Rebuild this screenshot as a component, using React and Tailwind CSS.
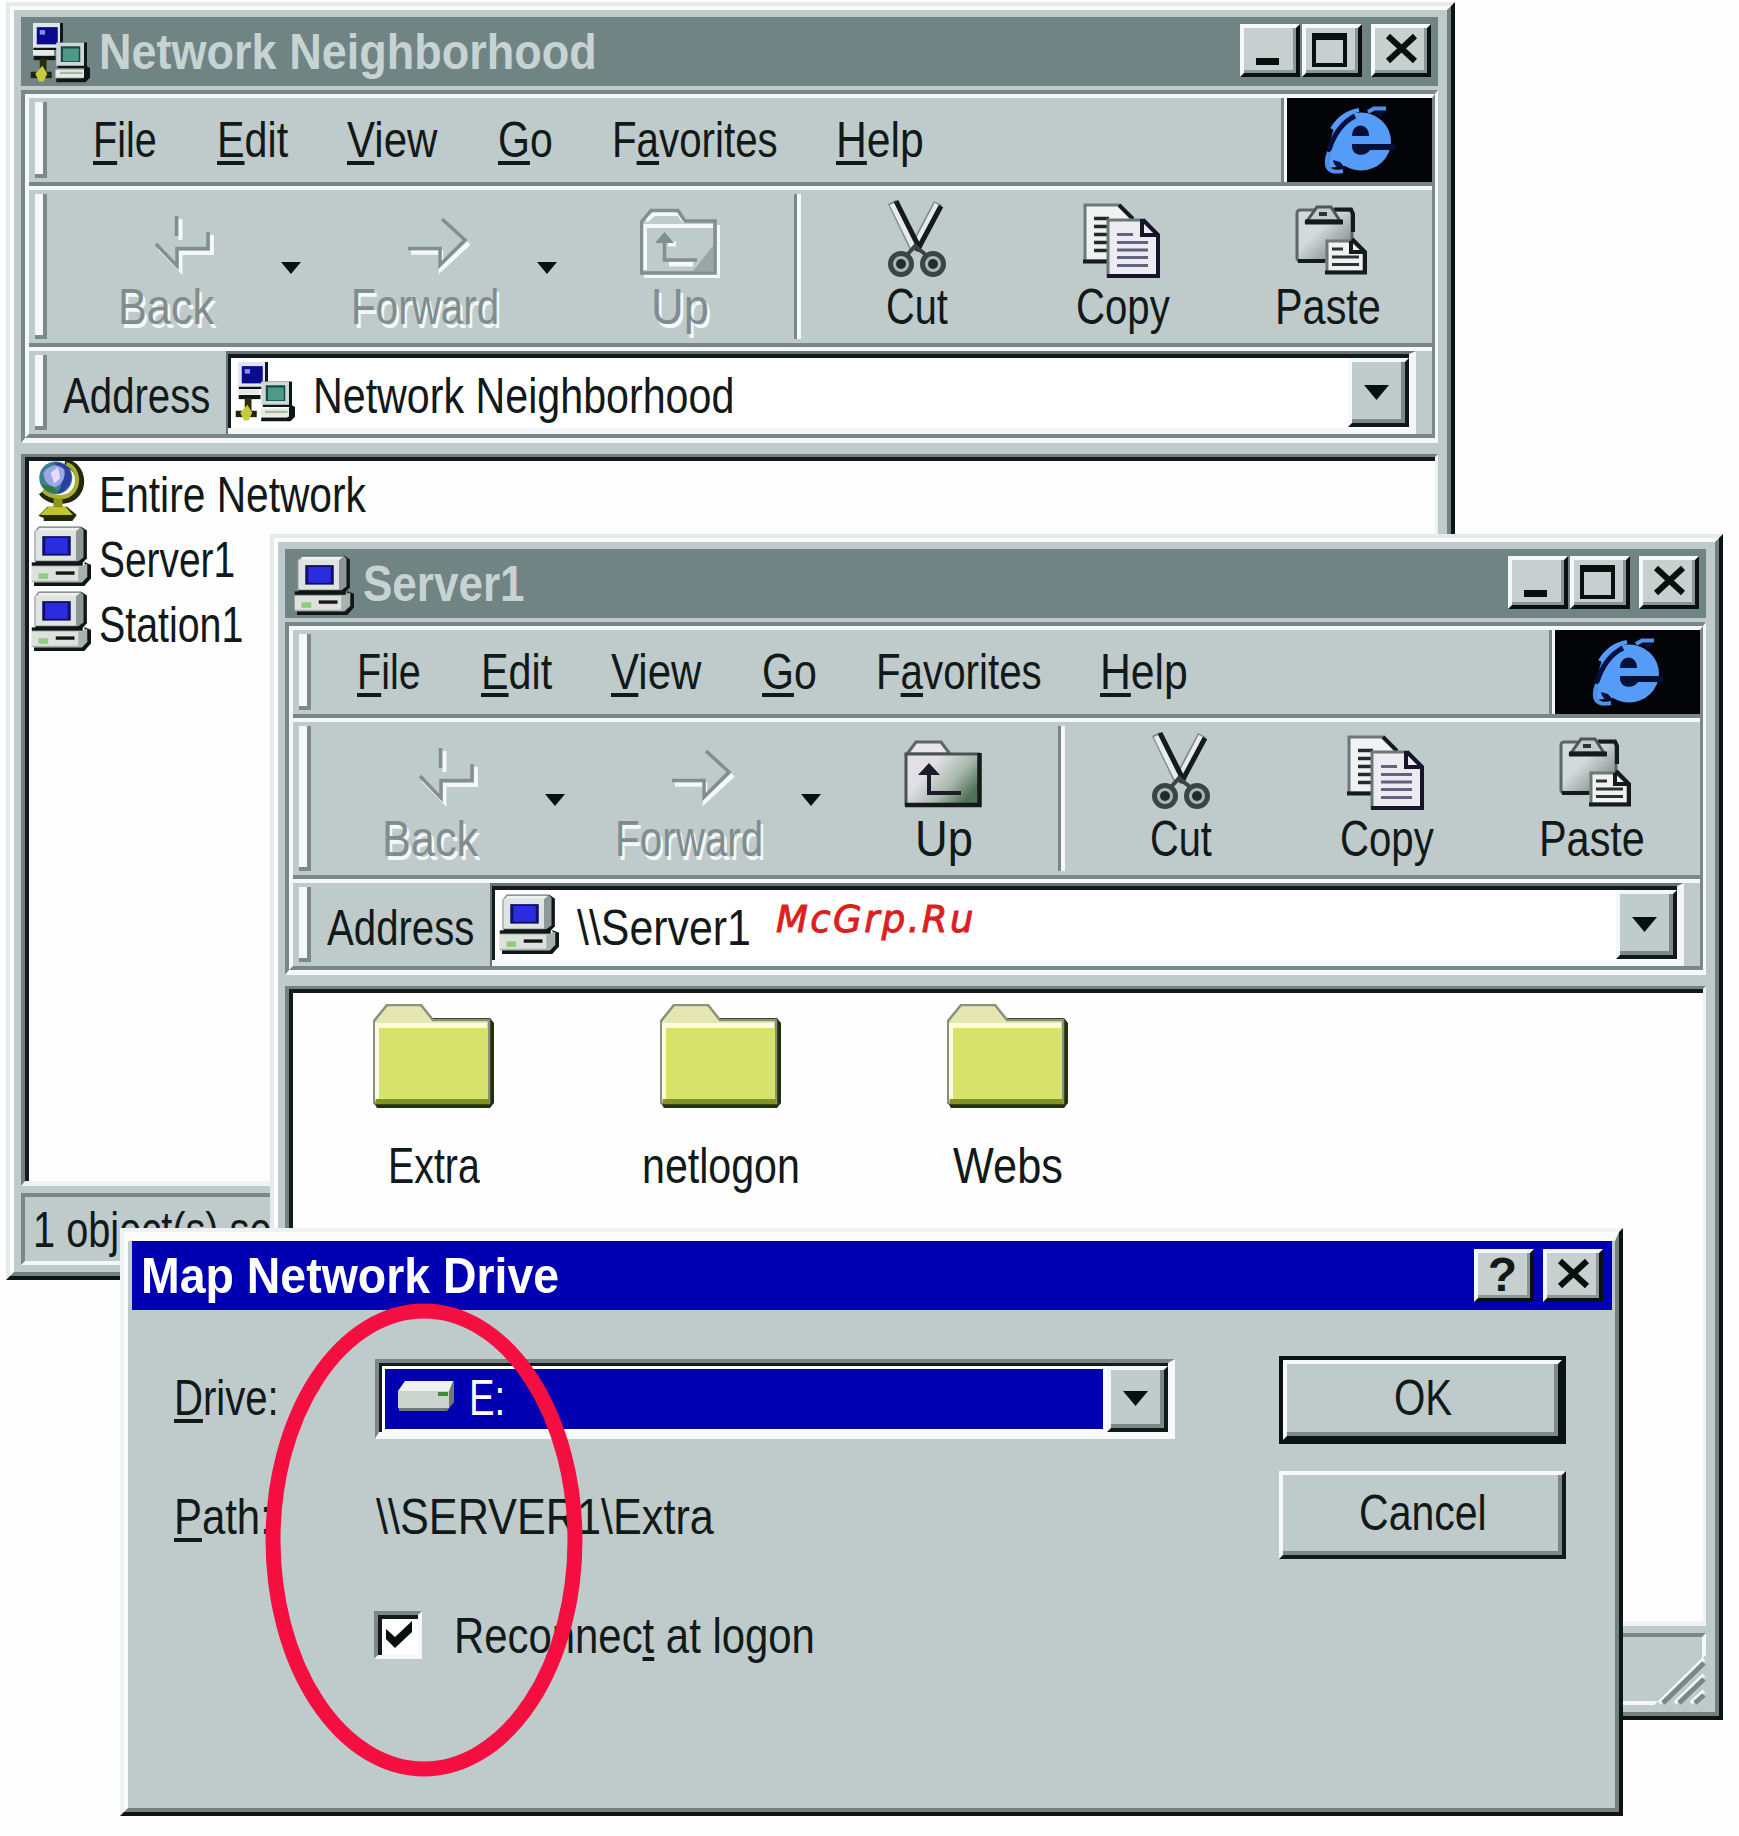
import { useLayoutEffect, useRef, useState } from "react";

// Label squeezed to a given width, like the narrow bitmap system font
const Label = ({ w, children, className = "" }) => {
  const ref = useRef(null);
  const [scale, setScale] = useState(1);

  useLayoutEffect(() => {
    setScale(w / ref.current.offsetWidth);
  }, [w]);

  return (
    <div
      className={`shrink-0 h-[50px] text-[50px] leading-[54px] whitespace-pre ${className}`}
      style={{ width: w }}
    >
      <span
        ref={ref}
        className="inline-block origin-left"
        style={{ transform: `scaleX(${scale})` }}
      >
        {children}
      </span>
    </div>
  );
};

const U = ({ children }) => (
  <span className="underline decoration-[4px] underline-offset-[4px] [text-decoration-skip-ink:none]">
    {children}
  </span>
);

const ComputerIcon = ({ className = "" }) => (
  <svg viewBox="0 0 16 16" className={`shrink-0 w-[60px] h-[60px] ${className}`}>
    <path d="M2 0.2H13.4L14.9 1.2V8.6L13.6 10H1.2V1.4Z" fill="#101616" />
    <path d="M2 0.2H13.2L14 1V8.4L12.6 9.4H0.9V1.5Z" fill="#8d9797" />
    <path d="M2.1 0.5H13L11.8 1.6H1.6Z" fill="#eef1f0" />
    <rect x="1.2" y="1.2" width="10.8" height="8" fill="#dfe3e2" />
    <rect x="3" y="2.7" width="7.6" height="5.2" fill="#10106a" />
    <rect x="3.8" y="3.2" width="6" height="4.2" fill="#2b2be0" />
    <rect x="0.2" y="9.7" width="13.6" height="0.9" fill="#101616" />
    <path d="M14.2 9.6L16 10.3V14L14.2 16H0.8V15H13.6L15 13.4Z" fill="#101616" />
    <path d="M0.2 10.7H13.4L15 10V13.6L13.4 15H0.2Z" fill="#a7b1b0" />
    <rect x="0.2" y="10.9" width="12.4" height="3.7" fill="#dde3dc" />
    <rect x="2" y="12.6" width="2.6" height="1.5" fill="#8fce7c" />
    <rect x="6.6" y="12.1" width="5" height="0.9" fill="#151515" />
  </svg>
);

const NetworkIcon = ({ className = "" }) => (
  <svg viewBox="0 0 16 16" className={`shrink-0 w-[60px] h-[60px] ${className}`}>
    <path d="M1 0H8.8V7.2H1Z" fill="#101616" />
    <path d="M0.8 0H8V6.6H0.8Z" fill="#dfe6ee" />
    <rect x="1.8" y="1.1" width="5.6" height="4.6" fill="#0a0a8c" />
    <rect x="2.6" y="1.9" width="1.4" height="1.2" fill="#8c8cf0" />
    <rect x="0.8" y="7.2" width="5.6" height="1.5" fill="#e4eae6" />
    <rect x="1" y="8.8" width="5.8" height="1.1" fill="#101616" />
    <rect x="2.6" y="9.6" width="1.8" height="5" fill="#2a2e08" />
    <rect x="0.2" y="13" width="5.6" height="1.7" fill="#20240a" />
    <path d="M3.3 11.4L4.6 13.5L3.6 15.6H2.4L1.4 13.5Z" fill="#c6cc3c" />
    <path d="M7.4 5.2H15.2V12H7.4Z" fill="#101616" />
    <path d="M7 5.2H14.4V11.4H7Z" fill="#cfd8d8" />
    <rect x="8.2" y="6.2" width="5.2" height="4.2" fill="#164a42" />
    <rect x="8.8" y="6.8" width="4.2" height="3.4" fill="#4d9a88" />
    <path d="M14.6 11.2L16 12V14.6L14.8 15.8H7V14.8H14Z" fill="#101616" />
    <path d="M6.8 12.4H14.4V14.6H6.8Z" fill="#e4ece0" />
    <rect x="8" y="13" width="6" height="0.6" fill="#aab6aa" />
  </svg>
);

const GlobeIcon = () => (
  <svg viewBox="0 0 16 16" className="shrink-0 w-[60px] h-[60px]">
    <path d="M9 0.5C14.4 1.4 14.4 9.2 9.2 10.2C6.4 10.8 4.2 9.8 3 8.2" fill="none" stroke="#23280a" strokeWidth="2.2" />
    <path d="M9.4 0.8C13.4 2 13.2 8.6 9 9.5C6.4 10 4.6 9.2 3.2 7.8" fill="none" stroke="#a9af2e" strokeWidth="1.1" />
    <circle cx="6.6" cy="4.5" r="4.4" fill="#3f7f8c" />
    <path d="M6 0.4C9 0.2 10.8 2 10.8 4.4C10.4 7.2 8.6 8.6 7 8.6C9 6 8.6 2.4 6 0.4Z" fill="#2c3fa0" />
    <path d="M3.4 3C4.8 1 7.2 0.6 8.8 2.2C9.4 4 8.4 6.4 6.4 7C4.4 6.6 3.2 5 3.4 3Z" fill="#9aa6e6" />
    <path d="M5.2 3.2L7.2 1.6L7.8 4.6L6.2 6Z" fill="#e4dcf4" />
    <path d="M2.6 6.2C3.8 8 5.6 8.8 7.2 8.4L5.8 6.8Z" fill="#2f7a3a" />
    <rect x="6" y="10" width="2.4" height="2.6" fill="#8f951c" />
    <path d="M4.4 12.2H9.6L12.2 14.4L11 16H3.4V15.2L2 14.6Z" fill="#23280a" />
    <path d="M4.6 12.2H9.2L11.2 14.4H2.4Z" fill="#c0c62a" />
  </svg>
);

const FolderIcon = () => (
  <svg viewBox="0 0 121 104" className="w-[121px] h-[104px]">
    <path d="M4 104L1 99V17L4 14H117L121 19V99L117 104Z" fill="#22300c" />
    <path d="M1 99V17L14 1H48L60 16H116V99Z" fill="#e4e8b0" stroke="#8a8f80" strokeWidth="2.5" />
    <rect x="2" y="19" width="112" height="76" fill="#fbfde0" />
    <rect x="6" y="24" width="109" height="74" fill="#d7e26a" />
    <rect x="3" y="95" width="113" height="5" fill="#7f9424" />
  </svg>
);

const BackIcon = () => (
  <svg viewBox="118 190 96 90" className="w-[96px] h-[90px]" fill="none">
    <path d="M180.500 219V240M159 248L180.500 270V253H212V235" stroke="#f4f8f8" strokeWidth="4" />
    <path d="M176.500 216V236M156 244L177 266V248.500H208V232" stroke="#838f8f" strokeWidth="3.500" />
  </svg>
);

const ForwardIcon = () => (
  <svg viewBox="351 190 148 90" className="w-[148px] h-[90px]" fill="none">
    <path d="M411 252.500H441V269L469 243" stroke="#f4f8f8" strokeWidth="4.500" />
    <path d="M408 248.500H440V265L465 240L442 219" stroke="#838f8f" strokeWidth="3.500" />
  </svg>
);

const UpIcon = ({ disabled }) =>
  disabled ? (
    <svg viewBox="641 190 80 90" className="w-[80px] h-[90px]" fill="none">
      <path d="M647 221L655 214H680L686 222M645 276H720V225M646 270V226H714" stroke="#f4f8f8" strokeWidth="4" />
      <path d="M642.500 273V222L652 210.500H679L686 221H716V273Z" stroke="#838f8f" strokeWidth="3.500" />
      <path d="M694 271L714 246V271Z" fill="#9aa6a6" />
      <path d="M669 244H677M670 264H694" stroke="#f4f8f8" strokeWidth="5" />
      <path d="M665.500 240V260H698" stroke="#838f8f" strokeWidth="3.500" />
      <path d="M656 243L665.500 232L675 243Z" fill="#838f8f" />
    </svg>
  ) : (
    <svg viewBox="641 190 80 90" className="w-[80px] h-[90px]">
      <defs>
        <linearGradient id="up" x1="0" y1="0" x2="1" y2="0.6">
          <stop offset="0.35" stopColor="#e2dfe6" />
          <stop offset="0.7" stopColor="#a9b8ac" />
          <stop offset="1" stopColor="#4f7058" />
        </linearGradient>
      </defs>
      <path d="M644 222L653 210H678L687 222Z" fill="#e8e6ec" stroke="#5d6666" strokeWidth="3" />
      <rect x="643" y="223" width="74" height="50" fill="url(#up)" />
      <path d="M643 274V222H717" fill="none" stroke="#4a5252" strokeWidth="3" />
      <path d="M642 273H716.500V221" fill="none" stroke="#141a1a" strokeWidth="4.500" />
      <path d="M666 240V261H698" fill="none" stroke="#1d1a2a" strokeWidth="4" />
      <path d="M655 243L666 231L677 243Z" fill="#1d1a2a" />
    </svg>
  );

const CutIcon = () => (
  <svg viewBox="888 189 60 90" className="w-[60px] h-[90px]" fill="none">
    <path d="M893 201L916 249M939 202L914 249" stroke="#7f8a8a" strokeWidth="9" />
    <path d="M893 203L914 246M938 203L917 243" stroke="#e6ebeb" strokeWidth="5" />
    <path d="M897 200L921 248M942 205L918 250" stroke="#141b1b" strokeWidth="5" />
    <circle cx="902" cy="263" r="10.500" fill="#aab5b5" stroke="#3a4444" strokeWidth="5" />
    <circle cx="902" cy="263" r="5" fill="#222b2b" />
    <circle cx="934" cy="263" r="10.500" fill="#aab5b5" stroke="#3a4444" strokeWidth="5" />
    <circle cx="934" cy="263" r="5" fill="#222b2b" />
    <path d="M908 254L916 245L927 254" stroke="#3a4444" strokeWidth="4" />
  </svg>
);

const CopyIcon = () => (
  <svg viewBox="1078 189 92 90" className="w-[92px] h-[90px]">
    <path d="M1086 204H1120L1133 217V260H1086Z" fill="#f1f3f3" stroke="#6d7777" strokeWidth="3" />
    <path d="M1120 204L1134 218M1084 260.500H1110" stroke="#141b1b" strokeWidth="4" />
    <path d="M1095 217.500H1110M1095 225.500H1108M1095 233.500H1108M1095 241.500H1108M1095 249.500H1108" stroke="#222a2a" strokeWidth="3.500" />
    <path d="M1109 219H1145L1159 233V275H1109Z" fill="#ecebf2" stroke="#6d7777" strokeWidth="3" />
    <path d="M1144 219L1159 234V275H1108M1143 218V234H1158" fill="none" stroke="#15152a" strokeWidth="4" />
    <path d="M1118 233.500H1134M1118 241.500H1149M1118 249H1149M1118 256.500H1149M1118 264.500H1149" stroke="#62627c" strokeWidth="3" />
  </svg>
);

const PasteIcon = () => (
  <svg viewBox="1277 190 104 90" className="w-[104px] h-[90px]">
    <defs>
      <linearGradient id="clip" x1="0" y1="0" x2="1" y2="1">
        <stop offset="0.4" stopColor="#d3dada" />
        <stop offset="1" stopColor="#66726f" />
      </linearGradient>
    </defs>
    <rect x="1298" y="210" width="55" height="51" rx="3" fill="url(#clip)" stroke="#5c6666" strokeWidth="3" />
    <path d="M1335 209.500H1352L1354 214V232M1299 261H1326" fill="none" stroke="#141b1b" strokeWidth="4" />
    <path d="M1308 221L1318 207H1332L1341 221Z" fill="#c3cccc" stroke="#4c5656" strokeWidth="3" />
    <path d="M1306 222H1344" stroke="#141b1b" strokeWidth="5" />
    <rect x="1320" y="212" width="8" height="4" fill="#2b3333" />
    <path d="M1328 241H1353L1365 252V272H1328Z" fill="#f1f3f3" stroke="#6d7777" strokeWidth="3" />
    <path d="M1353 239L1366 252V272.500H1326M1352 241V252H1365" fill="none" stroke="#141b1b" strokeWidth="4" />
    <path d="M1333 249H1344M1333 257H1360M1333 264.500H1360" stroke="#2b3333" strokeWidth="3" />
  </svg>
);

const InternetIcon = () => (
  <svg viewBox="1287 98 145 85" className="shrink-0 w-[145px] h-[85px] bg-[#020408]">
    <ellipse cx="1361" cy="141.500" rx="30" ry="29" fill="#559cf8" />
    <path d="M1338 130L1330 152L1328 168L1345 166L1350 150Z" fill="#559cf8" />
    <path d="M1332 129C1338 119 1348 112 1359 110" fill="none" stroke="#559cf8" strokeWidth="4" />
    <path d="M1355 116C1343 122 1334 134 1329 150" fill="none" stroke="#031040" strokeWidth="5" />
    <path d="M1329 152C1324 166 1327 174 1343 171" fill="none" stroke="#4f90ee" strokeWidth="4" />
    <path d="M1333 160C1334 167 1339 169 1346 169L1340 162Z" fill="#031040" />
    <path d="M1368 112L1374 108.500H1386" fill="none" stroke="#4f90ee" strokeWidth="4" />
    <path d="M1374 111L1380 117L1386 112Z" fill="#031040" />
    <path d="M1352 136C1352 122 1369 122 1369 136Z" fill="#04103a" />
    <path d="M1352 144H1395V150H1370C1366 157 1352 157 1352 146Z" fill="#04103a" />
  </svg>
);

const Triangle = ({ className }) => (
  <svg viewBox="0 0 20 12" className={`shrink-0 ${className}`}>
    <path d="M0 0H20L10 12Z" fill="#080f0f" />
  </svg>
);

const FrameButton = ({ children, className = "" }) => (
  <div className={`shrink-0 w-[60px] h-[53px] border-4 border-t-[#f6f9f9] border-l-[#f6f9f9] border-r-[#0a1010] border-b-[#0a1010] ${className}`}>
    <div className="h-full bg-[#c8d0cf] border-r-[3px] border-b-[3px] border-[#8b9797]">
      {children}
    </div>
  </div>
);

const CloseGlyph = () => (
  <svg viewBox="0 0 49 42" className="w-[49px] h-[42px]">
    <path d="M13 8L40 33M40 8L13 33" stroke="#080f0f" strokeWidth="6" />
  </svg>
);

const DropButton = ({ className = "" }) => (
  <div className={`shrink-0 w-[61px] border-4 border-t-[#f4f8f8] border-l-[#f4f8f8] border-r-[#101818] border-b-[#101818] ${className}`}>
    <div className="h-full flex items-center justify-center bg-[#c0cccb] border-r-4 border-b-4 border-[#7d8989]">
      <Triangle className="w-[27px] h-[15px] mt-[3px]" />
    </div>
  </div>
);

const Grip = () => (
  <div className="shrink-0 w-[12px] ml-[6px] my-[4px] bg-[#f4f8f8] border-r-4 border-b-4 border-[#7d8989]" />
);

const Divider = () => (
  <div className="h-[8px] shrink-0 border-t-4 border-t-[#7b8787] border-b-4 border-b-[#f4f8f8]" />
);

const Tool = ({ label, w, icon, disabled, className = "" }) => (
  <div className={`shrink-0 flex flex-col items-center ${className}`}>
    {icon}
    <Label
      w={w}
      className={disabled ? "text-[#818d8d] [text-shadow:3px_4px_0_#f4f8f8]" : ""}
    >
      {label}
    </Label>
  </div>
);

const MenuBar = () => (
  <div className="flex h-[84px] shrink-0">
    <Grip />
    <div className="flex pt-[15px]">
      <Label w={64} className="ml-[46px]"><U>F</U>ile</Label>
      <Label w={71} className="ml-[60px]"><U>E</U>dit</Label>
      <Label w={90} className="ml-[59px]"><U>V</U>iew</Label>
      <Label w={55} className="ml-[61px]"><U>G</U>o</Label>
      <Label w={166} className="ml-[59px]">F<U>a</U>vorites</Label>
      <Label w={88} className="ml-[58px]"><U>H</U>elp</Label>
    </div>
    <div className="ml-auto w-[3px] bg-[#7b8787]" />
    <div className="w-[3px] bg-[#f4f8f8]" />
    <InternetIcon />
  </div>
);

const Toolbar = ({ upDisabled }) => (
  <div className="flex h-[153px] shrink-0">
    <Grip />
    <Tool label="Back" w={96} icon={<BackIcon />} disabled className="ml-[71px]" />
    <Triangle className="w-[20px] h-[12px] ml-[67px] mt-[72px]" />
    <Tool label="Forward" w={148} icon={<ForwardIcon />} disabled className="ml-[50px]" />
    <Triangle className="w-[20px] h-[12px] ml-[38px] mt-[72px]" />
    <Tool label="Up" w={58} icon={<UpIcon disabled={upDisabled} />} disabled={upDisabled} className="ml-[83px]" />
    <div className="w-[7px] ml-[74px] my-[4px] border-l-[3px] border-l-[#7b8787] border-r-4 border-r-[#f4f8f8]" />
    <Tool label="Cut" w={62} icon={<CutIcon />} className="ml-[85px]" />
    <Tool label="Copy" w={94} icon={<CopyIcon />} className="ml-[128px]" />
    <Tool label="Paste" w={106} icon={<PasteIcon />} className="ml-[105px]" />
  </div>
);

const AddressBar = ({ icon, text, textWidth }) => (
  <div className="flex h-[83px] shrink-0">
    <Grip />
    <Label w={147} className="ml-[16px] mt-[18px]">Address</Label>
    <div className="flex-1 ml-[16px] mr-[16px] border-t-[3px] border-l-2 border-r-[7px] border-t-[#687474] border-l-[#687474] border-r-[#f4f6f7] bg-[#f4f6f7]">
      <div className="h-[74px] flex border-t-4 border-l-[3px] border-[#131a1a] bg-white">
        <div className="pt-[4px] pl-[4px]">{icon}</div>
        <Label w={textWidth} className="ml-[18px] mt-[11px]">{text}</Label>
        <DropButton className="ml-auto h-[69px]" />
      </div>
    </div>
  </div>
);

const Explorer = ({ title, titleWidth, icon, addressIcon, address, addressWidth, upDisabled, status, children, className }) => (
  <div className={`absolute bg-[#bfcbcb] border-4 border-t-[#e6ebea] border-l-[#e6ebea] border-r-[#0c1414] border-b-[#0c1414] ${className}`}>
    <div className="h-full flex flex-col p-[7px] pr-[9px] border-4 border-t-[#fafcfc] border-l-[#fafcfc] border-r-[#75817f] border-b-[#75817f]">
      <div className="flex shrink-0 h-[69px] bg-[#708484] mb-[4px]">
        <div className="pl-[9px] pt-[6px]">{icon}</div>
        <Label w={titleWidth} className="ml-[9px] mt-[8px] font-bold text-[#c6d3d2]">{title}</Label>
        <FrameButton className="ml-auto mt-[7px]">
          <div className="w-[23px] h-[7px] ml-[12px] translate-y-[30px] bg-[#080f0f]" />
        </FrameButton>
        <FrameButton className="ml-[2px] mt-[7px]">
          <div className="w-[35px] h-[34px] ml-[6px] translate-y-[5px] border-4 border-t-[7px] border-[#080f0f]" />
        </FrameButton>
        <FrameButton className="ml-[9px] mr-[7px] mt-[7px]">
          <CloseGlyph />
        </FrameButton>
      </div>

      <div className="shrink-0 border-t-4 border-l-4 border-t-[#7b8787] border-l-[#7b8787] border-r-[3px] border-b-[5px] border-r-[#f4f8f8] border-b-[#f4f8f8]">
        <div className="flex flex-col border-t-4 border-l-4 border-t-[#f4f8f8] border-l-[#f4f8f8] border-r-[3px] border-b-4 border-r-[#7b8787] border-b-[#7b8787]">
          <MenuBar />
          <Divider />
          <Toolbar upDisabled={upDisabled} />
          <Divider />
          <AddressBar icon={addressIcon} text={address} textWidth={addressWidth} />
        </div>
      </div>

      <div className="flex-1 mt-[11px] border-t-[3px] border-l-4 border-t-[#75817f] border-l-[#75817f] border-r-[3px] border-b-[5px] border-r-[#eff3f3] border-b-[#eff3f3]">
        <div className="h-full bg-[#fefefe] border-t-4 border-l-4 border-[#131a1a]">{children}</div>
      </div>

      <div className="relative shrink-0 h-[72px] mt-[7px] border-4 border-t-[#7b8787] border-l-[#7b8787] border-r-[#f4f8f8] border-b-[#f4f8f8]">
        {status}
      </div>
    </div>
  </div>
);

const ListItem = ({ icon, w, name }) => (
  <div className="flex h-[65px]">
    <div className="w-[60px] ml-[2px]">{icon}</div>
    <Label w={w} className="ml-[8px] mt-[7px]">{name}</Label>
  </div>
);

const Folder = ({ name, w }) => (
  <div className="w-[287px] flex flex-col items-center">
    <FolderIcon />
    <Label w={w} className="mt-[31px]">{name}</Label>
  </div>
);

const ResizeGrip = () => (
  <svg viewBox="0 0 52 52" className="absolute -right-1 -bottom-1 w-[52px] h-[52px]">
    <path d="M0 52L52 2V52Z" fill="#bfcbcb" />
    <path d="M5 50L50 6M21 50L50 22M37 50L50 38" stroke="#f4f8f8" strokeWidth="4" />
    <path d="M9 50L50 10M25 50L50 26M41 50L50 42" stroke="#7b8787" strokeWidth="5" />
  </svg>
);

const DriveIcon = () => (
  <svg viewBox="0 0 58 33" className="shrink-0 w-[58px] h-[33px]">
    <path d="M8 1H57V22L50 31H2V12Z" fill="#6f7a74" />
    <path d="M8 1H56L52 11H1Z" fill="#eef1ee" />
    <path d="M1 11H52V28H1Z" fill="#cdd4cf" />
    <rect x="41" y="12" width="10" height="4" fill="#3f8a3a" />
  </svg>
);

const MapDriveDialog = () => (
  <div className="absolute left-[120px] top-[1228px] w-[1503px] h-[588px] bg-[#bfcbcb] border-4 border-t-[#eef2f2] border-l-[#eef2f2] border-r-[#0c1414] border-b-[#0c1414]">
    <div className="h-full border-t-[9px] border-l-4 border-t-[#fafcfc] border-l-[#fafcfc] border-r-4 border-b-4 border-r-[#75817f] border-b-[#75817f]">
      <div className="flex h-[69px] ml-[4px] mr-[3px] bg-[#0000b2]">
        <Label w={418} className="ml-[9px] mt-[8px] font-bold text-white">Map Network Drive</Label>
        <FrameButton className="ml-auto mt-[8px]">
          <div className="text-center text-[48px] leading-[43px] font-bold">?</div>
        </FrameButton>
        <FrameButton className="ml-[9px] mr-[9px] mt-[8px]">
          <CloseGlyph />
        </FrameButton>
      </div>

      <div className="flex">
        <div className="w-[1048px] ml-[4px] pt-[49px]">
          <div className="flex h-[80px]">
            <Label w={105} className="ml-[42px] mt-[12px]"><U>D</U>rive:</Label>
            <div className="flex ml-[96px] w-[800px] bg-white border-t-4 border-l-4 border-[#7b8787] border-r-[7px] border-b-[7px] border-r-[#f8fafa] border-b-[#f8fafa]">
              <div className="flex flex-1 pt-[3px] pl-[3px] border-t-[3px] border-l-[3px] border-[#131a1a]">
                <div className="flex flex-1 h-[60px] bg-[#0000b2]">
                  <div className="pt-[11px] pl-[12px]"><DriveIcon /></div>
                  <Label w={36} className="ml-[14px] mt-[2px] text-white">E:</Label>
                </div>
                <DropButton className="ml-[4px] -mt-[3px]" />
              </div>
            </div>
          </div>
          <div className="flex mt-[51px]">
            <Label w={98} className="ml-[42px]"><U>P</U>ath:</Label>
            <Label w={338} className="ml-[104px]">{"\\\\SERVER1\\Extra"}</Label>
          </div>
          <div className="flex mt-[69px]">
            <div className="w-[48px] h-[48px] ml-[242px] mt-[2px] border-4 border-t-[#7b8787] border-l-[#7b8787] border-r-[#f4f8f8] border-b-[#f4f8f8]">
              <svg viewBox="0 0 36 36" className="w-[40px] h-[40px] bg-white border-t-4 border-l-4 border-[#131a1a]">
                <path d="M4 10L13 18L30 2V13L13 29L4 20Z" fill="#080f0f" />
              </svg>
            </div>
            <Label w={361} className="ml-[32px]">Reconnec<U>t</U> at logon</Label>
          </div>
        </div>

        <div className="flex flex-col gap-[27px] ml-[99px] pt-[46px]">
          <div className="w-[287px] h-[88px] border-4 border-[#0a1212]">
            <div className="h-full flex justify-center pt-[7px] border-t-4 border-l-4 border-t-[#f6f9f9] border-l-[#f6f9f9] border-r-4 border-b-4 border-r-[#0a1212] border-b-[#0a1212] shadow-[inset_-4px_-4px_0_#7d8989]">
              <Label w={58}>OK</Label>
            </div>
          </div>
          <div className="w-[287px] h-[88px] flex justify-center pt-[11px] border-4 border-t-[#f6f9f9] border-l-[#f6f9f9] border-r-[#131a1a] border-b-[#131a1a] shadow-[inset_-4px_-4px_0_#7d8989]">
            <Label w={128}>Cancel</Label>
          </div>
        </div>
      </div>
    </div>
  </div>
);

export default function App() {
  return (
    <div className="relative w-[1739px] h-[1836px] overflow-hidden bg-[#fefefe] text-[#121919] font-['Liberation_Sans',Arial,sans-serif]">
      <Explorer
        className="left-[6px] top-[2px] w-[1449px] h-[1278px]"
        title="Network Neighborhood"
        titleWidth={498}
        icon={<NetworkIcon />}
        addressIcon={<NetworkIcon />}
        address="Network Neighborhood"
        addressWidth={421}
        upDisabled
        status={<Label w={345} className="ml-[8px] mt-[6px]">1 object(s) selected</Label>}
      >
        <ListItem icon={<GlobeIcon />} w={267} name="Entire Network" />
        <ListItem icon={<ComputerIcon />} w={136} name="Server1" />
        <ListItem icon={<ComputerIcon />} w={144} name="Station1" />
      </Explorer>

      <Explorer
        className="left-[270px] top-[534px] w-[1453px] h-[1186px]"
        title="Server1"
        titleWidth={162}
        icon={<ComputerIcon />}
        addressIcon={<ComputerIcon />}
        address={"\\\\Server1"}
        addressWidth={174}
        status={<ResizeGrip />}
      >
        <div className="flex pt-[11px] -ml-[3px]">
          <Folder name="Extra" w={92} />
          <Folder name="netlogon" w={158} />
          <Folder name="Webs" w={110} />
        </div>
      </Explorer>

      <MapDriveDialog />

      <div className="absolute left-[776px] top-[897px] text-[37px] leading-[46px] tracking-[2.4px] italic text-[#dc1f1f] [-webkit-text-stroke:1px_#dc1f1f] font-['DejaVu_Sans',sans-serif]">
        McGrp.Ru
      </div>

      <svg viewBox="0 0 320 480" className="absolute left-[264px] top-[1300px] w-[320px] h-[480px]">
        <ellipse cx="160" cy="240" rx="151" ry="229" fill="none" stroke="#f40f40" strokeWidth="15" />
      </svg>
    </div>
  );
}
